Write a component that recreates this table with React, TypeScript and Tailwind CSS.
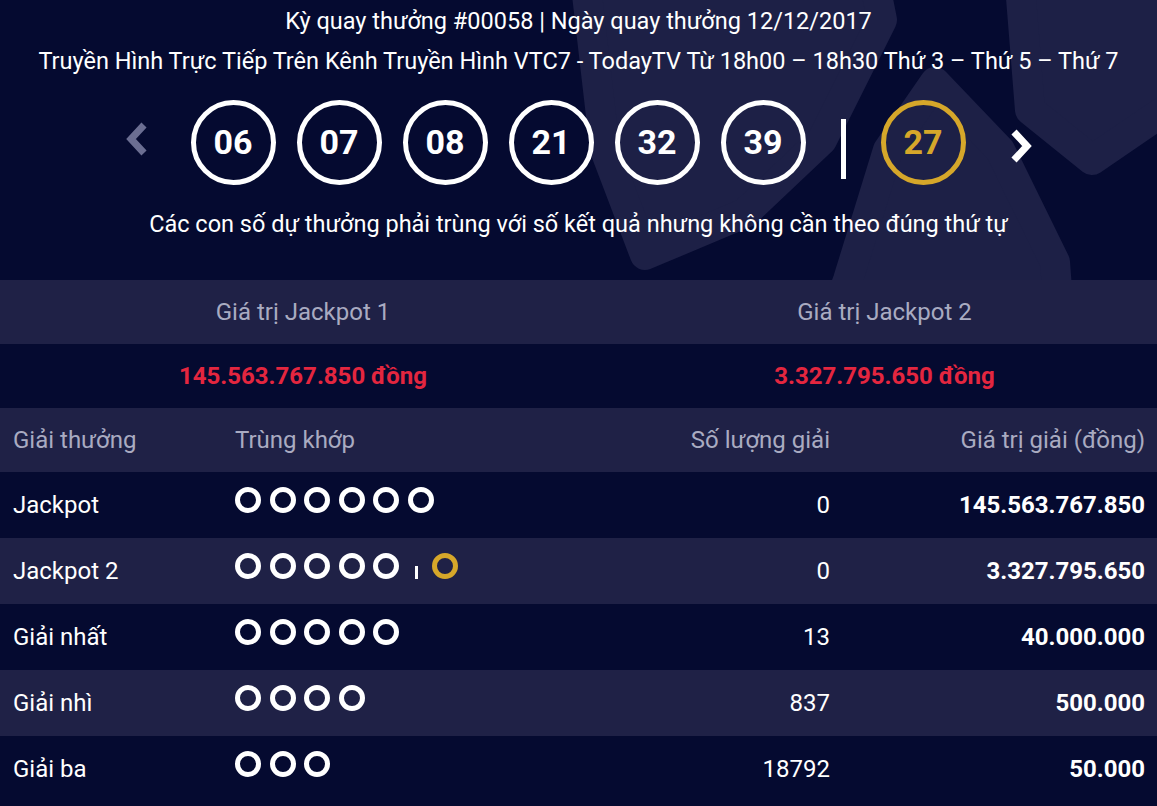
const mainBalls = ['06', '07', '08', '21', '32', '39'];
const bonusBall = '27';

interface PrizeRow {
  name: string;
  matches: number;
  bonus?: boolean;
  count: string;
  value: string;
}

const prizes: PrizeRow[] = [
  { name: 'Jackpot', matches: 6, count: '0', value: '145.563.767.850' },
  { name: 'Jackpot 2', matches: 5, bonus: true, count: '0', value: '3.327.795.650' },
  { name: 'Giải nhất', matches: 5, count: '13', value: '40.000.000' },
  { name: 'Giải nhì', matches: 4, count: '837', value: '500.000' },
  { name: 'Giải ba', matches: 3, count: '18792', value: '50.000' },
];

// background petals of the logo behind the draw header
function HeaderShapes() {
  return (
    <svg className="absolute inset-0 h-full w-full" viewBox="0 0 1157 280" preserveAspectRatio="none">
      <g fill="#1d2046" stroke="#1d2046" strokeWidth="30" strokeLinejoin="round">
        <polygon points="583,-40 605,150 645,255 745,213 822,140 882,20 870,-40" />
        <polygon points="935,82 1000,150 1055,262 1060,330 830,330 848,280 888,150" />
        <polygon points="1018,-40 1030,110 1092,160 1180,100 1180,-40" />
      </g>
    </svg>
  );
}

function Chevron({ dir, color }: { dir: 'left' | 'right'; color: string }) {
  return (
    <svg width="24" height="34" viewBox="0 0 24 34">
      <polyline
        points={dir === 'left' ? '19,3 6,17 19,31' : '5,3 18,17 5,31'}
        fill="none"
        stroke={color}
        strokeWidth="7"
      />
    </svg>
  );
}

function Ball({ n, gold = false }: { n: string; gold?: boolean }) {
  return (
    <div
      className={`flex h-[85px] w-[85px] items-center justify-center rounded-full border-[5px] text-[34px] font-bold ${
        gold ? 'border-[#d6a72a] text-[#d6a72a]' : 'border-white text-white'
      }`}
    >
      {n}
    </div>
  );
}

function Dot({ gold = false }: { gold?: boolean }) {
  return (
    <span
      className={`inline-block h-[26px] w-[26px] rounded-full border-[5px] ${gold ? 'border-[#d6a72a]' : 'border-white'}`}
    />
  );
}

export default function App() {
  return (
    <div className="min-h-screen bg-[#050a30] font-['Roboto',sans-serif] text-white">
      {/* draw header */}
      <div className="relative h-[280px] overflow-hidden">
        <HeaderShapes />
        <div className="relative flex flex-col items-center pt-[7px]">
          <p className="text-[23.5px] leading-[28px]">Kỳ quay thưởng #00058 | Ngày quay thưởng 12/12/2017</p>
          <p className="mt-[12px] text-[23.5px] leading-[28px]">
            Truyền Hình Trực Tiếp Trên Kênh Truyền Hình VTC7 - TodayTV Từ 18h00 – 18h30 Thứ 3 – Thứ 5 – Thứ 7
          </p>
          <div className="mt-[25px] flex items-center">
            <div className="mb-[8px] mr-[42px]">
              <Chevron dir="left" color="#6b6e92" />
            </div>
            <div className="flex gap-[21px]">
              {mainBalls.map((n) => (
                <Ball key={n} n={n} />
              ))}
            </div>
            <div className="mx-[35px] mt-[12px] h-[60px] w-[5px] bg-white" />
            <Ball n={bonusBall} gold />
            <div className="ml-[43px] mt-[6px]">
              <Chevron dir="right" color="#ffffff" />
            </div>
          </div>
          <p className="mt-[25px] text-[23.5px] leading-[28px]">
            Các con số dự thưởng phải trùng với số kết quả nhưng không cần theo đúng thứ tự
          </p>
        </div>
      </div>

      {/* jackpot values */}
      <div className="grid grid-cols-[606px_1fr] bg-[#1f2146] text-[24px] text-[#a9abc1]">
        <div className="flex h-[64px] items-center justify-center">Giá trị Jackpot 1</div>
        <div className="flex h-[64px] items-center justify-center pl-[6px]">Giá trị Jackpot 2</div>
      </div>
      <div className="grid grid-cols-[606px_1fr] text-[24px] font-bold text-[#e4263f]">
        <div className="flex h-[64px] items-center justify-center">145.563.767.850 đồng</div>
        <div className="flex h-[64px] items-center justify-center pl-[6px]">3.327.795.650 đồng</div>
      </div>

      {/* prize table */}
      <div className="grid h-[64px] grid-cols-[222px_1fr_221px_314px] items-center bg-[#1f2146] text-[24px] text-[#a9abc1]">
        <div className="pl-[13px]">Giải thưởng</div>
        <div className="pl-[13px]">Trùng khớp</div>
        <div className="pr-[13px] text-right">Số lượng giải</div>
        <div className="pr-[12px] text-right">Giá trị giải (đồng)</div>
      </div>
      {prizes.map((p, i) => (
        <div
          key={p.name}
          className={`grid h-[66px] grid-cols-[222px_1fr_221px_314px] items-center text-[24px] ${
            i % 2 === 1 ? 'bg-[#1f2146]' : ''
          }`}
        >
          <div className="pl-[13px]">{p.name}</div>
          <div className="flex items-center gap-[8.5px] pb-[10px] pl-[13px]">
            {Array.from({ length: p.matches }).map((_, k) => (
              <Dot key={k} />
            ))}
            {p.bonus && (
              <>
                <span className="ml-[7.5px] mr-[5.5px] mt-[12px] inline-block h-[13px] w-[3px] bg-white" />
                <Dot gold />
              </>
            )}
          </div>
          <div className="pr-[13px] text-right">{p.count}</div>
          <div className="pr-[12px] text-right font-bold">{p.value}</div>
        </div>
      ))}
    </div>
  );
}
